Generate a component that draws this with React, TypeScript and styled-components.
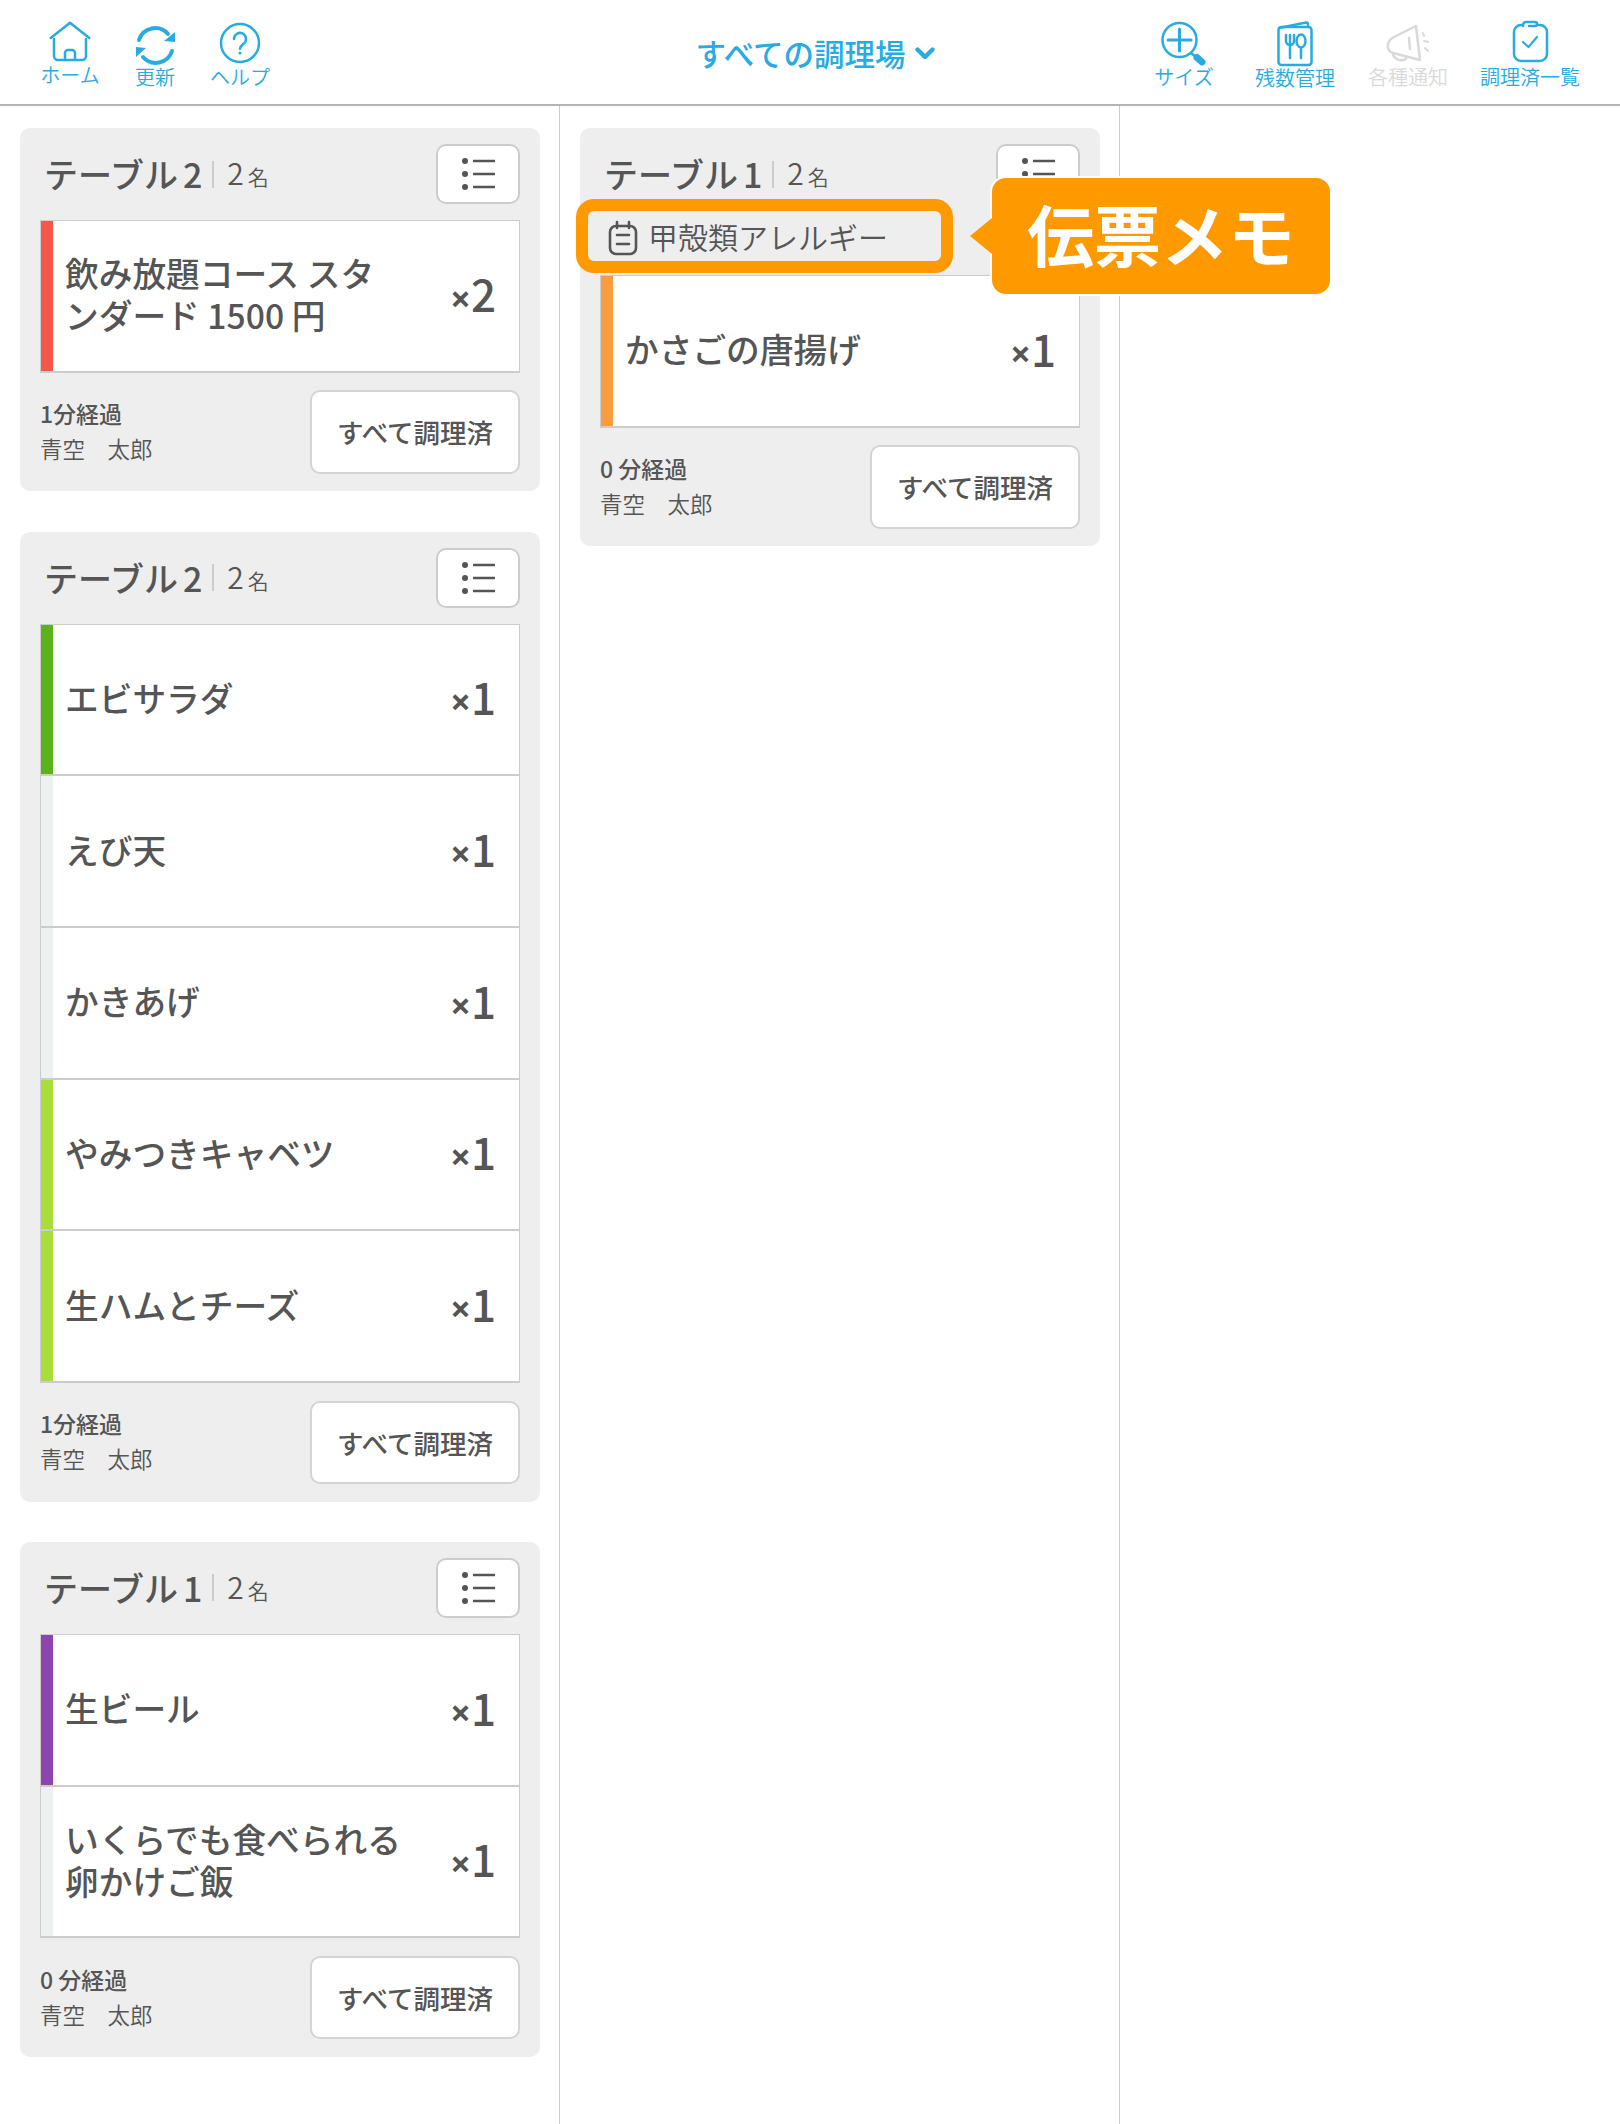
import React from "react";
import styled, { createGlobalStyle } from "styled-components";

const Global = createGlobalStyle`
  html, body { margin: 0; padding: 0; background: #fff; }
  body { font-family: "Noto Sans CJK JP", "Noto Sans", sans-serif; color: #555; }
  * { box-sizing: border-box; }
`;

const BLUE = "#29abe2";

const Page = styled.div`
  width: 1620px;
  min-height: 2124px;
  display: flex;
  flex-direction: column;
`;
const Toolbar = styled.header`
  height: 106px;
  flex: none;
  display: grid;
  grid-template-columns: 1fr auto 1fr;
  border-bottom: 2px solid #b4b4b4;
  background: #fff;
`;
const ToolGroupLeft = styled.div`
  display: flex;
  gap: 1px;
  padding: 20px 0 0 28px;
`;
const ToolGroupRight = styled.div`
  display: flex;
  justify-content: flex-end;
  padding: 20px 18px 0 0;
`;
const ToolItem = styled.div<{ $w: number; $off?: boolean }>`
  width: ${(p) => p.$w}px;
  display: flex;
  flex-direction: column;
  align-items: center;
  color: ${(p) => (p.$off ? "#d9d9d9" : BLUE)};
`;
const ToolIcon = styled.svg`
  width: 48px;
  height: 48px;
  flex: none;
  fill: none;
  stroke: currentColor;
  stroke-width: 2.5;
  stroke-linecap: round;
  stroke-linejoin: round;
`;
const ToolLabel = styled.span<{ $lift?: number }>`
  font-size: 20px;
  line-height: 20px;
  font-weight: 350;
  white-space: nowrap;
  margin-top: ${(p) => p.$lift ?? -1}px;
`;
const StationPicker = styled.div`
  display: flex;
  align-items: center;
  gap: 9px;
  padding: 0 0 0 10px;
  color: ${BLUE};
  font-size: 30.5px;
  font-weight: 550;
  height: 106px;
`;
const Board = styled.main`
  position: relative;
  flex: 1;
  display: grid;
  grid-template-columns: 560px 560px 1fr;
`;
const Column = styled.section`
  display: flex;
  flex-direction: column;
  gap: 40.4px;
  padding: 22px 19px 0 20px;
  border-right: 1px solid #cccccc;
  &:last-of-type { border-right: none; }
`;
const Card = styled.article`
  background: #eeeeee;
  border-radius: 10px;
  padding: 16px 20px 17.5px;
`;
const CardHead = styled.div`
  display: flex;
  align-items: center;
  justify-content: space-between;
  height: 60px;
`;
const TableName = styled.div`
  display: flex;
  align-items: center;
  padding-left: 4px;
  color: #555;
`;
const TableTitle = styled.span`
  font-size: 34px;
  font-weight: 550;
  line-height: 44px;
  white-space: nowrap;
`;
const TableNum = styled.span`
  margin-left: 5px;
`;
const Divider = styled.i`
  display: block;
  width: 2px;
  height: 27px;
  margin: 0 13px 0 10px;
  background: #cccccc;
`;
const Guests = styled.span`
  font-size: 30px;
  line-height: 44px;
  font-weight: 350;
  white-space: nowrap;
`;
const GuestUnit = styled.span`
  font-size: 21px;
  margin-left: 4px;
`;
const MenuButton = styled.button`
  width: 84px;
  height: 60px;
  padding: 0;
  background: #fff;
  border: 2px solid #cccccc;
  border-radius: 10px;
  display: flex;
  align-items: center;
  justify-content: center;
  color: #555;
`;
const ListIcon = styled.svg`
  width: 36px;
  height: 34px;
`;
const MemoRow = styled.div`
  position: relative;
  height: 50px;
  margin: 7px 0 14px;
  display: flex;
  align-items: center;
  gap: 9px;
  padding-left: 7px;
  color: #555;
`;
const MemoIcon = styled.svg`
  width: 32px;
  height: 36px;
  flex: none;
  fill: none;
  stroke: #555;
  stroke-width: 2.6;
  stroke-linecap: round;
  margin-top: 4px;
`;
const MemoText = styled.span`
  font-size: 30px;
  line-height: 40px;
  font-weight: 350;
  white-space: nowrap;
`;
const MemoRing = styled.div`
  position: absolute;
  left: -24px;
  top: -12px;
  width: 377px;
  height: 74px;
  border: 12px solid #ff9900;
  border-radius: 18px;
  pointer-events: none;
`;
const Callout = styled.div`
  position: absolute;
  left: 990px;
  top: 70px;
  width: 342px;
  height: 120px;
  padding-bottom: 8px;
  background: #ff9900;
  border: 2px solid #fff;
  border-radius: 16px;
  display: flex;
  align-items: center;
  justify-content: center;
  color: #fff;
  font-size: 67px;
  font-weight: 700;
  line-height: 1;
  &::before {
    content: "";
    position: absolute;
    left: -22px;
    top: 40px;
    width: 0;
    height: 0;
    border-style: solid;
    border-width: 18px 22px 18px 0;
    border-color: transparent #ff9900 transparent transparent;
  }
`;
const ItemList = styled.ul`
  list-style: none;
  margin: 16px 0 0;
  padding: 0;
  border-top: 1px solid #cccccc;
  &.after-memo { margin-top: 0; }
`;
const Item = styled.li`
  display: flex;
  height: 151.7px;
  background: #fff;
  border-left: 1px solid #cccccc;
  border-right: 1px solid #cccccc;
  border-bottom: 2px solid #cccccc;
`;
const Stripe = styled.span<{ $color: string }>`
  width: 12px;
  flex: none;
  background: ${(p) => p.$color};
`;
const ItemBody = styled.div`
  flex: 1;
  display: flex;
  align-items: center;
  justify-content: space-between;
  padding: 0 23px 0 12px;
`;
const ItemName = styled.div`
  width: 339px;
  font-size: 33.7px;
  font-weight: 550;
  line-height: 42px;
  color: #555;
  margin-top: -3px;
`;
const Qty = styled.div`
  display: flex;
  align-items: baseline;
  color: #555;
  font-weight: 500;
`;
const QtyTimes = styled.span`
  font-family: "Noto Sans", sans-serif;
  font-size: 36px;
  line-height: 44px;
  font-weight: 700;
`;
const QtyNum = styled.span`
  font-size: 44px;
  line-height: 44px;
`;
const CardFoot = styled.div`
  display: flex;
  align-items: center;
  justify-content: space-between;
  margin-top: 17.5px;
`;
const FootInfo = styled.div`
  display: flex;
  flex-direction: column;
`;
const Elapsed = styled.span`
  font-size: 23px;
  line-height: 34px;
  font-weight: 550;
  margin-top: -3px;
`;
const Staff = styled.span`
  font-size: 22.5px;
  line-height: 34px;
  font-weight: 350;
  white-space: pre;
  margin-top: 1px;
`;
const DoneButton = styled.button`
  width: 210px;
  height: 83.5px;
  padding: 0;
  background: #fff;
  border: 2px solid #d4d4d4;
  border-radius: 10px;
  font-family: inherit;
  font-size: 26.5px;
  font-weight: 550;
  color: #555;
`;

const Home = () => (
  <ToolIcon viewBox="0 0 48 48">
    <path d="M4.7 18 24 2.7 43.3 18" />
    <path d="M8 19v17a4 4 0 0 0 4 4h24a4 4 0 0 0 4-4V19" />
    <path d="M19 40v-7a3 3 0 0 1 3-3h4a3 3 0 0 1 3 3v7" />
  </ToolIcon>
);
const Refresh = () => (
  <ToolIcon viewBox="0 0 48 48">
    <path d="M8 20A17 17 0 0 1 37 14" strokeWidth="4" />
    <path d="M44 12v10l-11-1z" fill="currentColor" stroke="none" />
    <path d="M41 31A17 17 0 0 1 12 37" strokeWidth="4" />
    <path d="M5 27v10l10-9z" fill="currentColor" stroke="none" />
  </ToolIcon>
);
const Help = () => (
  <ToolIcon viewBox="0 0 48 48">
    <circle cx="24" cy="23" r="19" />
    <path d="M18 19a6 6 0 1 1 10 4.4c-2.4 2-4 2.8-4 5.4" />
    <circle cx="24" cy="33" r="1.6" fill="currentColor" stroke="none" />
  </ToolIcon>
);
const Zoom = () => (
  <ToolIcon viewBox="0 0 48 48">
    <circle cx="19.5" cy="20" r="17" />
    <path d="M8 20h23M19.5 9v22" strokeWidth="3" />
    <path d="M31 33l5 4" />
    <path d="M37 37.5l5 4.5" strokeWidth="7" />
  </ToolIcon>
);
const MenuBook = () => (
  <ToolIcon viewBox="0 0 48 48">
    <rect x="7.5" y="7" width="33" height="38" rx="3" />
    <path d="M8 8 35 2.5a2 2 0 0 1 2 2V7" />
    <path d="M15 15v6a4 4 0 0 0 8 0v-6M19 15v23" />
    <ellipse cx="30" cy="21" rx="4.5" ry="6.5" />
    <path d="M30 27.5V38" />
  </ToolIcon>
);
const Megaphone = () => (
  <ToolIcon viewBox="0 0 48 48">
    <path d="M32 6 10 17C2 21 2 31 9 33l27 7z" />
    <path d="M9 33c0 7 11 10 14 4" />
    <path d="M25 18l1 11" />
    <path d="M39 13l1 3M40 21l4 1M41 28l3 3" strokeWidth="2" />
  </ToolIcon>
);
const Clipboard = () => (
  <ToolIcon viewBox="0 0 48 48">
    <path d="M17 5h-2a7 7 0 0 0-7 7v22a7 7 0 0 0 7 7h19a7 7 0 0 0 7-7V12a7 7 0 0 0-7-7h-2" />
    <path d="M17 6V5a3 3 0 0 1 3-3h9a2 2 0 0 1 0 4h-6" />
    <path d="M17 22l5.5 5L31 17" strokeWidth="2.2" />
  </ToolIcon>
);
const ListGlyph = () => (
  <ListIcon viewBox="0 0 36 34">
    <circle cx="5" cy="4" r="3" fill="#555" />
    <circle cx="5" cy="17" r="3" fill="#555" />
    <circle cx="5" cy="30" r="3" fill="#555" />
    <path d="M13 4h22M13 17h22M13 30h22" stroke="#555" strokeWidth="2.4" />
  </ListIcon>
);

type Row = { color: string; name: string; qty: number };
type Order = { table: number; elapsed: string; rows: Row[]; memo?: string };

const RED = "#f7564a";
const GREEN = "#5bb31c";
const PALE = "#edf1f2";
const LIME = "#a8dd3a";
const PURPLE = "#8e44ad";
const ORANGE = "#f89c3e";

const left: Order[] = [
  { table: 2, elapsed: "1分経過", rows: [{ color: RED, name: "飲み放題コース スタンダード 1500 円", qty: 2 }] },
  {
    table: 2,
    elapsed: "1分経過",
    rows: [
      { color: GREEN, name: "エビサラダ", qty: 1 },
      { color: PALE, name: "えび天", qty: 1 },
      { color: PALE, name: "かきあげ", qty: 1 },
      { color: LIME, name: "やみつきキャベツ", qty: 1 },
      { color: LIME, name: "生ハムとチーズ", qty: 1 },
    ],
  },
  {
    table: 1,
    elapsed: "0 分経過",
    rows: [
      { color: PURPLE, name: "生ビール", qty: 1 },
      { color: PALE, name: "いくらでも食べられる卵かけご飯", qty: 1 },
    ],
  },
];
const middle: Order[] = [
  { table: 1, elapsed: "0 分経過", memo: "甲殻類アレルギー", rows: [{ color: ORANGE, name: "かさごの唐揚げ", qty: 1 }] },
];

const OrderCard = ({ order }: { order: Order }) => (
  <Card>
    <CardHead>
      <TableName>
        <TableTitle>
          テーブル<TableNum>{order.table}</TableNum>
        </TableTitle>
        <Divider />
        <Guests>
          2<GuestUnit>名</GuestUnit>
        </Guests>
      </TableName>
      <MenuButton aria-label="メニュー">
        <ListGlyph />
      </MenuButton>
    </CardHead>
    {order.memo && (
      <MemoRow>
        <MemoIcon viewBox="0 0 32 36">
          <rect x="3" y="6" width="26" height="28" rx="6" />
          <path d="M10 2v6M22 2v6M10 15h12M10 24h12" />
        </MemoIcon>
        <MemoText>{order.memo}</MemoText>
        <MemoRing />
      </MemoRow>
    )}
    <ItemList className={order.memo ? "after-memo" : undefined}>
      {order.rows.map((r) => (
        <Item key={r.name}>
          <Stripe $color={r.color} />
          <ItemBody>
            <ItemName>{r.name}</ItemName>
            <Qty>
              <QtyTimes>×</QtyTimes>
              <QtyNum>{r.qty}</QtyNum>
            </Qty>
          </ItemBody>
        </Item>
      ))}
    </ItemList>
    <CardFoot>
      <FootInfo>
        <Elapsed>{order.elapsed}</Elapsed>
        <Staff>青空　太郎</Staff>
      </FootInfo>
      <DoneButton>すべて調理済</DoneButton>
    </CardFoot>
  </Card>
);

export default function App() {
  return (
    <Page>
      <Global />
      <Toolbar>
        <ToolGroupLeft>
          <ToolItem $w={84}>
            <Home />
            <ToolLabel $lift={-3}>ホーム</ToolLabel>
          </ToolItem>
          <ToolItem $w={84}>
            <Refresh />
            <ToolLabel>更新</ToolLabel>
          </ToolItem>
          <ToolItem $w={84}>
            <Help />
            <ToolLabel>ヘルプ</ToolLabel>
          </ToolItem>
        </ToolGroupLeft>
        <StationPicker>
          すべての調理場
          <svg width="20" height="13" viewBox="0 0 20 13" fill="none">
            <path d="M2.5 2.5 10 10l7.5-7.5" stroke={BLUE} strokeWidth="4.4" strokeLinecap="round" strokeLinejoin="round" />
          </svg>
        </StationPicker>
        <ToolGroupRight>
          <ToolItem $w={96}>
            <Zoom />
            <ToolLabel>サイズ</ToolLabel>
          </ToolItem>
          <ToolItem $w={126}>
            <MenuBook />
            <ToolLabel $lift={0}>残数管理</ToolLabel>
          </ToolItem>
          <ToolItem $w={100} $off>
            <Megaphone />
            <ToolLabel>各種通知</ToolLabel>
          </ToolItem>
          <ToolItem $w={144}>
            <Clipboard />
            <ToolLabel>調理済一覧</ToolLabel>
          </ToolItem>
        </ToolGroupRight>
      </Toolbar>
      <Board>
        <Column>
          {left.map((o, i) => (
            <OrderCard key={i} order={o} />
          ))}
        </Column>
        <Column>
          {middle.map((o, i) => (
            <OrderCard key={i} order={o} />
          ))}
        </Column>
        <Column />
        <Callout>伝票メモ</Callout>
      </Board>
    </Page>
  );
}
